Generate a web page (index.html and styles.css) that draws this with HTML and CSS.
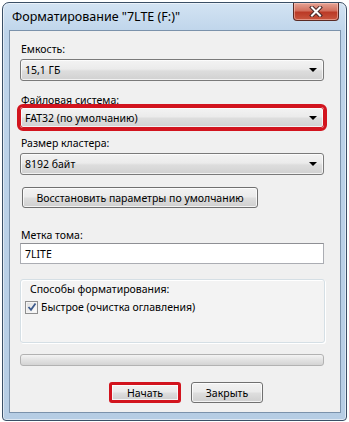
FILE: index.html
```html
<!DOCTYPE html>
<html lang="ru">
<head>
<meta charset="utf-8">
<title>Форматирование</title>
<link rel="stylesheet" href="styles.css">
</head>
<body>
<div class="window">
  <div class="titlebar">
    <span class="title">Форматирование "7LTE (F:)"</span>
    <div class="close">
      <svg width="14" height="11" viewBox="0 0 14 11">
        <path d="M3 1.5 L11 9.5 M11 1.5 L3 9.5" stroke="#4a2a2a" stroke-width="4" stroke-linecap="square" fill="none"/>
        <path d="M3 1.5 L11 9.5 M11 1.5 L3 9.5" stroke="#ffffff" stroke-width="2" stroke-linecap="square" fill="none"/>
      </svg>
    </div>
  </div>
  <div class="client">
    <div class="label l1">Емкость:</div>
    <div class="combo c1"><span>15,1 ГБ</span><i class="arrow"></i></div>
    <div class="label l2">Файловая система:</div>
    <div class="combo c2 hl"><span>FAT32 (по умолчанию)</span><i class="arrow"></i></div>
    <div class="label l3">Размер кластера:</div>
    <div class="combo c3"><span>8192 байт</span><i class="arrow"></i></div>
    <div class="btn restore">Восстановить параметры по умолчанию</div>
    <div class="label l4">Метка тома:</div>
    <div class="textbox">7LITE</div>
    <div class="group">
      <div class="group-label">Способы форматирования:</div>
      <div class="check">
        <span class="box">
          <svg width="10" height="10" viewBox="0 0 10 10">
            <path d="M1.5 5 L4 7.8 L8.5 1.5" stroke="#3c5a8c" stroke-width="1.8" fill="none"/>
          </svg>
        </span>
        <span>Быстрое (очистка оглавления)</span>
      </div>
    </div>
    <div class="progress"></div>
    <div class="buttons">
      <div class="btn start hl-btn">Начать</div>
      <div class="btn close-btn">Закрыть</div>
    </div>
  </div>
</div>
</body>
</html>
```

FILE: styles.css
```css
html, body {
  margin: 0;
  padding: 0;
  background: #ffffff;
}

body {
  font-family: "Noto Sans", "DejaVu Sans", sans-serif;
  font-size: 10.5px;
  color: #000;
}

.window {
  box-sizing: border-box;
  margin: 2px 0 0 2px;
  width: 345px;
  height: 419px;
  border: 1px solid #3a4f66;
  border-radius: 7px 7px 4px 4px;
  background: linear-gradient(#d3e3f3, #bed4ea 30px, #b6cde4);
  box-shadow: inset 0 0 0 1px rgba(255,255,255,0.55);
  padding: 0 5px 7px 6px;
  display: flex;
  flex-direction: column;
}

.titlebar {
  height: 27px;
  display: flex;
  align-items: flex-start;
}

.title {
  font-size: 12.5px;
  line-height: 16px;
  padding-top: 6px;
  padding-left: 3px;
  color: #000;
}

.close {
  margin-left: auto;
  margin-right: 2px;
  width: 46px;
  height: 18px;
  box-sizing: border-box;
  border: 1px solid #5a2a24;
  border-top: none;
  border-radius: 0 0 4px 4px;
  background: linear-gradient(#e6a495, #d2705e 45%, #bb3a26 55%, #c8563f);
  display: flex;
  align-items: center;
  justify-content: center;
  box-shadow: inset 0 0 0 1px rgba(255,210,200,0.5);
}

.client {
  box-sizing: border-box;
  height: 383px;
  border: 1px solid #7b92ab;
  background: #f0f0f0;
  padding: 0 15px 0 10px;
  display: flex;
  flex-direction: column;
  align-items: flex-start;
}

.label {
  line-height: 14px;
  padding-left: 1px;
}
.l1 { margin-top: 11px; }
.l2 { margin-top: 12px; }
.l3 { margin-top: 8px; }
.l4 { margin-top: 20px; }

.combo {
  box-sizing: border-box;
  width: 304px;
  height: 22px;
  border: 1px solid #7a7a7a;
  border-radius: 3px;
  background: linear-gradient(#f3f3f3, #ebebeb 45%, #dddddd 55%, #d1d1d1);
  display: flex;
  align-items: center;
  padding-left: 4px;
  box-shadow: inset 0 0 0 1px rgba(255,255,255,0.7);
}
.combo span { flex: 1; }
.c1 { margin-top: 3px; }
.c2 { margin-top: 0; height: 21px; }
.c3 { margin-top: 3px; }

.arrow {
  width: 0;
  height: 0;
  border-left: 4px solid transparent;
  border-right: 4px solid transparent;
  border-top: 4px solid #000;
  margin-right: 6px;
}

.hl {
  outline: 3px solid #d2141e;
  outline-offset: 0;
  border-color: #d2141e;
}

.btn {
  box-sizing: border-box;
  height: 21px;
  border: 1px solid #707070;
  border-radius: 3px;
  background: linear-gradient(#f2f2f2, #ebebeb 45%, #dddddd 55%, #cfcfcf);
  box-shadow: inset 0 0 0 1px rgba(255,255,255,0.75);
  display: flex;
  align-items: center;
  justify-content: center;
}

.restore {
  margin-top: 12px;
  margin-left: 2px;
  width: 236px;
}

.textbox {
  box-sizing: border-box;
  margin-top: 1px;
  width: 304px;
  height: 21px;
  border: 1px solid #abadb3;
  border-top-color: #8e8f94;
  background: #fff;
  display: flex;
  align-items: center;
  padding-left: 4px;
}

.group {
  box-sizing: border-box;
  margin-top: 15px;
  width: 305px;
  height: 64px;
  border: 1px solid #d5dfe5;
  border-radius: 3px;
  background: #f3f3f3;
  box-shadow: inset 1px 1px 0 #fff, 1px 1px 0 #fff;
  padding: 2px 0 0 9px;
}

.group-label {
  line-height: 14px;
}

.check {
  margin-top: 4px;
  margin-left: -5px;
  display: flex;
  align-items: center;
  gap: 3px;
  line-height: 14px;
}

.box {
  box-sizing: border-box;
  width: 13px;
  height: 13px;
  border: 1px solid #8f8f8f;
  background: linear-gradient(135deg, #dcdcdc, #ffffff);
  box-shadow: inset 0 0 0 1px #f4f4f4;
  display: flex;
  align-items: center;
  justify-content: center;
}

.progress {
  box-sizing: border-box;
  margin-top: 11px;
  width: 304px;
  height: 12px;
  border: 1px solid #b2b2b2;
  border-radius: 3px;
  background: linear-gradient(#f4f4f4, #e2e2e2 50%, #d4d4d4);
}

.buttons {
  margin-top: 16px;
  margin-left: 89px;
  display: flex;
  gap: 10px;
}

.buttons .btn {
  width: 72px;
}

.hl-btn {
  border: 3px solid #d2141e;
}
```
